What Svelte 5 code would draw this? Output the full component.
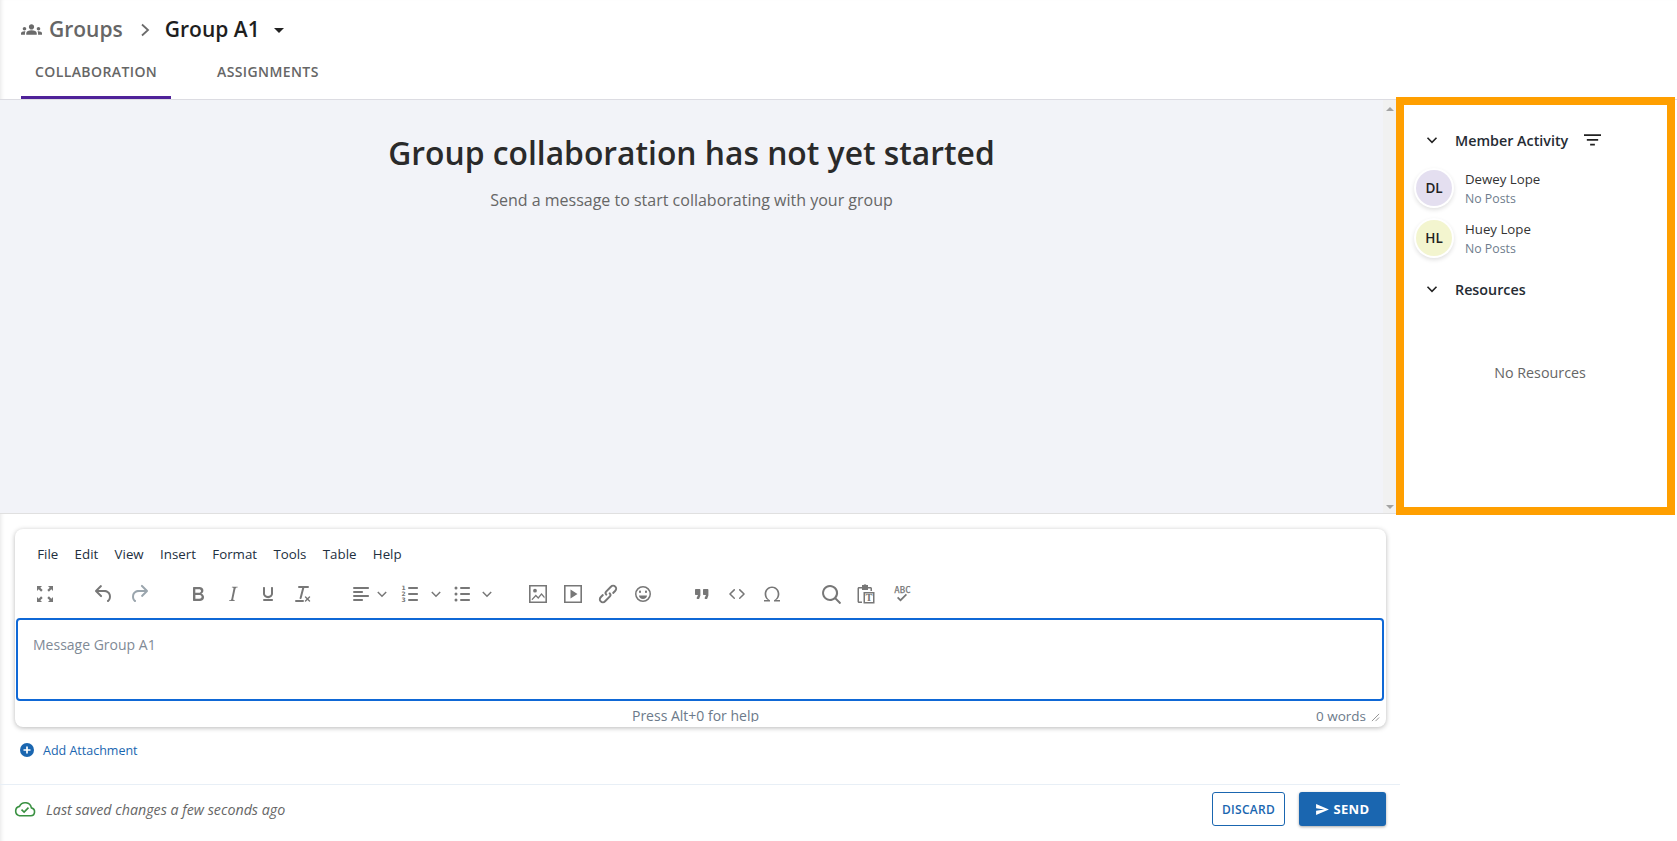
<script>
	const menus = ['File', 'Edit', 'View', 'Insert', 'Format', 'Tools', 'Table', 'Help'];

	const members = [
		{ initials: 'DL', name: 'Dewey Lope', color: '#e4dff0' },
		{ initials: 'HL', name: 'Huey Lope', color: '#f3f5cf' }
	];

	// tinymce-style icons on a 24px grid
	const icons = {
		full: 'M4 4h5L7.300 5.700l2.400 2.400-1.600 1.600-2.400-2.400L4 9V4Zm16 0v5l-1.700-1.700-2.400 2.400-1.600-1.600 2.400-2.400L15 4h5ZM4 20v-5l1.700 1.700 2.400-2.400 1.600 1.600-2.400 2.400L9 20H4Zm16 0h-5l1.700-1.700-2.400-2.400 1.600-1.600 2.400 2.400L20 15v5Z',
		undo: 'M6.400 8H12c3.700 0 6.200 2 6.800 5.100.6 2.700-.4 5.600-2.300 6.800a1 1 0 0 1-1-1.800c1.100-.6 1.800-2.700 1.400-4.600-.5-2.100-2.100-3.500-4.900-3.500H6.400l3.300 3.300a1 1 0 1 1-1.400 1.400l-5-5a1 1 0 0 1 0-1.400l5-5a1 1 0 0 1 1.400 1.400L6.400 8Z',
		redo: 'M17.600 10H12c-2.800 0-4.400 1.400-4.900 3.500-.4 2 .3 4 1.400 4.600a1 1 0 1 1-1 1.800c-2-1.200-2.900-4.100-2.300-6.800.6-3 3-5.100 6.800-5.100h5.600l-3.300-3.300a1 1 0 1 1 1.400-1.400l5 5a1 1 0 0 1 0 1.400l-5 5a1 1 0 0 1-1.400-1.400l3.300-3.300Z',
		bold: 'M7.800 19c-.3 0-.5 0-.6-.2l-.2-.5V5.700c0-.2 0-.4.2-.5l.6-.2h5c1.500 0 2.700.3 3.500 1 .7.6 1.100 1.400 1.100 2.500a3 3 0 0 1-.6 1.900c-.4.6-1 1-1.600 1.200.4.100.9.3 1.300.6s.8.7 1 1.200c.4.4.5 1 .5 1.600 0 1.300-.4 2.300-1.300 3-.8.7-2.100 1-3.800 1H7.800Zm5-8.300c.6 0 1.200-.1 1.600-.5.4-.3.6-.7.6-1.300 0-1.100-.8-1.700-2.300-1.700H9.300v3.500h3.400Zm.5 6c.7 0 1.300-.1 1.700-.4.4-.4.6-.9.6-1.500s-.2-1-.7-1.400c-.4-.3-1-.4-2-.4H9.400v3.800h4Z',
		italic: 'm16.700 4.700-.1.9h-.3c-.6 0-1 0-1.400.3-.3.3-.4.6-.5 1.100l-2.100 9.800v.6c0 .5.4.8 1.400.8h.2l-.2.8H8l.2-.8h.2c1.100 0 1.800-.5 2-1.500l2-9.800.1-.5c0-.6-.4-.8-1.400-.8h-.3l.2-.9h5.800Z',
		underline: 'M16 5c.6 0 1 .4 1 1v5.500a4 4 0 0 1-.4 1.800l-1 1.400a5.300 5.300 0 0 1-5.500 1 5 5 0 0 1-1.600-1c-.5-.4-.8-.9-1.100-1.400a4 4 0 0 1-.4-1.800V6c0-.6.4-1 1-1s1 .4 1 1v5.500c0 .3 0 .6.2 1l.6.7a3.300 3.300 0 0 0 2.200.8 3.400 3.400 0 0 0 2.200-.8c.3-.2.4-.5.6-.8l.2-.9V6c0-.6.4-1 1-1ZM8 17h8c.6 0 1 .4 1 1s-.4 1-1 1H8a1 1 0 0 1 0-2Z',
		clear: 'M13.200 6a1 1 0 0 1 0 .2l-2.600 10a1 1 0 0 1-1 .8h-.2a.8.8 0 0 1-.8-1l2.600-10H8a1 1 0 1 1 0-2h9a1 1 0 0 1 0 2h-3.800ZM5 18h7a1 1 0 0 1 0 2H5a1 1 0 0 1 0-2Zm13 1.500L16.500 18 15 19.500a.7.7 0 0 1-1-1l1.500-1.500-1.500-1.500a.7.7 0 0 1 1-1l1.500 1.500 1.500-1.500a.7.7 0 0 1 1 1L17.500 17l1.500 1.500a.7.7 0 0 1-1 1Z',
		align: 'M5 5h14c.6 0 1 .4 1 1s-.4 1-1 1H5a1 1 0 1 1 0-2Zm0 4h8c.6 0 1 .4 1 1s-.4 1-1 1H5a1 1 0 1 1 0-2Zm0 8h8c.6 0 1 .4 1 1s-.4 1-1 1H5a1 1 0 0 1 0-2Zm0-4h14c.6 0 1 .4 1 1s-.4 1-1 1H5a1 1 0 0 1 0-2Z',
		ol: 'M10 17h8c.6 0 1 .4 1 1s-.4 1-1 1h-8a1 1 0 0 1 0-2Zm0-6h8c.6 0 1 .4 1 1s-.4 1-1 1h-8a1 1 0 0 1 0-2Zm0-6h8c.6 0 1 .4 1 1s-.4 1-1 1h-8a1 1 0 1 1 0-2Z',
		ul: 'M11 5h8c.6 0 1 .4 1 1s-.4 1-1 1h-8a1 1 0 0 1 0-2Zm0 6h8c.6 0 1 .4 1 1s-.4 1-1 1h-8a1 1 0 0 1 0-2Zm0 6h8c.6 0 1 .4 1 1s-.4 1-1 1h-8a1 1 0 0 1 0-2ZM6 4.500a1.500 1.500 0 1 1 0 3 1.500 1.500 0 0 1 0-3Zm0 6a1.500 1.500 0 1 1 0 3 1.500 1.500 0 0 1 0-3Zm0 6a1.500 1.500 0 1 1 0 3 1.500 1.500 0 0 1 0-3Z',
		image: 'M3 3h18v18H3V3Zm1.600 1.600v14.800h14.800V4.600H4.600ZM9 6.800a1.900 1.900 0 1 1 0 3.800 1.900 1.900 0 0 1 0-3.800ZM5.500 17.200l4.300-4.600 2.400 2.400 3.300-4.100 3 3.700v1.800l-3-3.500-3.200 4-2.500-2.400-3.300 3.500h-.7v-.8Z',
		video: 'M3 3h18v18H3V3Zm1.600 1.600v14.800h14.800V4.600H4.600ZM9.500 7.500l7 4.500-7 4.500v-9Z',
		link: 'M6.200 12.300a1 1 0 0 1 1.400 1.400l-2 2a2 2 0 1 0 2.800 2.800l4.800-4.800a1 1 0 0 0 0-1.400 1 1 0 1 1 1.400-1.300 2.900 2.900 0 0 1 0 4L9.800 20a4 4 0 1 1-5.600-5.700l2-2Zm11.600-.6a1 1 0 0 1-1.400-1.400l2-2a2 2 0 1 0-2.800-2.800L10.800 10.300a1 1 0 0 0 0 1.400 1 1 0 1 1-1.400 1.300 2.900 2.900 0 0 1 0-4L14.200 4a4 4 0 1 1 5.600 5.700l-2 2Z',
		emoji: 'M9 11c.6 0 1-.6 1-1.300S9.600 8.500 9 8.500s-1 .5-1 1.200.4 1.300 1 1.300Zm6 0c.6 0 1-.6 1-1.300s-.4-1.200-1-1.200-1 .5-1 1.200.4 1.300 1 1.300Zm-7 2.500h8c0 2-1.800 3.500-4 3.500s-4-1.500-4-3.500ZM12 4a8 8 0 1 1 0 16 8 8 0 0 1 0-16Zm0 1.500a6.500 6.500 0 1 0 0 13 6.500 6.500 0 0 0 0-13Z',
		quote: 'M7.500 17h.9c.4 0 .7-.2.9-.6L10.200 14c.1-.3.200-.5.200-.8V8c0-.6-.4-1-1-1H6c-.6 0-1 .4-1 1v4c0 .6.400 1 1 1h2l-1.300 2.700a1 1 0 0 0 .8 1.300Zm8 0h.9c.4 0 .7-.2.9-.6L18.200 14c.1-.3.200-.5.200-.8V8c0-.6-.4-1-1-1H14c-.6 0-1 .4-1 1v4c0 .6.400 1 1 1h2l-1.300 2.700a1 1 0 0 0 .8 1.300Z',
		code: 'M9.800 15.700c.3.300.3.800 0 1-.3.400-.8.400-1 0l-4.400-4.100a.8.800 0 0 1 0-1.100l4.300-4.200c.3-.3.800-.3 1.100 0 .3.300.3.800 0 1.100L6 12l3.800 3.700ZM14.200 15.700 18 12l-3.800-3.600c-.3-.3-.3-.8 0-1.100.3-.3.800-.3 1.100 0l4.300 4.200c.3.300.3.800 0 1.100l-4.400 4.100c-.2.400-.7.400-1 0-.3-.2-.3-.7 0-1Z',
		omega: 'M4 19.500v-1.400h3.900A7.400 7.400 0 0 1 4.600 12c0-4.200 3.200-7.500 7.400-7.500s7.400 3.300 7.400 7.500a7.400 7.400 0 0 1-3.300 6.100H20v1.400h-6v-1.300c2.300-1 3.700-3.400 3.700-6.200 0-3.400-2.500-6-5.700-6s-5.700 2.600-5.700 6c0 2.800 1.400 5.200 3.700 6.200v1.300H4Z',
		search: 'M16 17.300a8 8 0 1 1 1.400-1.400l4.300 4.400a1 1 0 0 1-1.400 1.400l-4.400-4.400Zm-5-.3a6 6 0 1 0 0-12 6 6 0 0 0 0 12Z',
		paste: 'M8 3h1.500a2 2 0 0 1 3 0H14v2h2.500c.8 0 1.500.7 1.500 1.500V9h-1.500V6.500H14V8H8V6.500H5v13h3V21H5c-.8 0-1.500-.7-1.500-1.500v-13C3.500 5.700 4.200 5 5 5h3V3ZM9.500 10h11v11.500h-11V10Zm1.500 1.500V20h8v-8.500h-8Z',
		spell: 'M8 16l1.200-1.200 2.300 2.300 5.300-5.300L18 13l-6.500 6.500L8 16Z'
	};

	const groups = [
		[{ icon: 'full' }],
		[{ icon: 'undo' }, { icon: 'redo', off: true }],
		[{ icon: 'bold' }, { icon: 'italic' }, { icon: 'underline' }, { icon: 'clear' }],
		[{ icon: 'align', split: true, tight: true }, { icon: 'ol', split: true }, { icon: 'ul', split: true }],
		[{ icon: 'image' }, { icon: 'video' }, { icon: 'link' }, { icon: 'emoji' }],
		[{ icon: 'quote' }, { icon: 'code' }, { icon: 'omega' }],
		[{ icon: 'search' }, { icon: 'paste' }, { icon: 'spell' }]
	];
</script>

<div class="page">
	<header>
		<div class="crumbs">
			<svg class="people" viewBox="0 5.500 24 13" aria-hidden="true">
				<path d="M12 12.750c1.630 0 3.070.390 4.240.900 1.080.480 1.760 1.560 1.760 2.730V18H6v-1.610c0-1.180.680-2.260 1.760-2.730 1.170-.520 2.610-.910 4.240-.910ZM4 13c1.100 0 2-.900 2-2s-.900-2-2-2-2 .900-2 2 .900 2 2 2Zm1.130 1.100A6.980 6.980 0 0 0 4 14c-.990 0-1.930.210-2.780.580A2.010 2.010 0 0 0 0 16.430V18h4.500v-1.610c0-.830.230-1.610.630-2.290ZM20 13c1.100 0 2-.900 2-2s-.900-2-2-2-2 .900-2 2 .900 2 2 2Zm4 3.430c0-.810-.480-1.530-1.220-1.850A6.950 6.950 0 0 0 20 14c-.390 0-.760.040-1.130.100.400.680.630 1.460.630 2.290V18H24v-1.570ZM12 6c1.660 0 3 1.340 3 3s-1.340 3-3 3-3-1.340-3-3 1.340-3 3-3Z" />
			</svg>
			<span class="root">Groups</span>
			<svg class="sep" viewBox="0 0 10 14" aria-hidden="true"><path d="M2 1.500 8 7l-6 5.500" /></svg>
			<span class="current">Group A1</span>
			<span class="caret"></span>
		</div>
		<nav>
			<span class="tab active">COLLABORATION</span>
			<span class="tab">ASSIGNMENTS</span>
		</nav>
	</header>

	<div class="content">
		<div class="left">
			<section class="thread">
				<div class="empty">
					<h1>Group collaboration has not yet started</h1>
					<p>Send a message to start collaborating with your group</p>
				</div>
				<div class="scrollbar">
					<span class="arrow up"></span>
					<span class="arrow down"></span>
				</div>
			</section>

			<div class="composer">
				<div class="editor">
					<div class="menubar">
						{#each menus as menu}
							<span>{menu}</span>
						{/each}
					</div>
					<div class="toolbar">
						{#each groups as group}
							<div class="group">
								{#each group as btn}
									<span class="btn" class:split={btn.split} class:tight={btn.tight} class:off={btn.off}>
										<svg viewBox="0 0 24 24" aria-hidden="true">
											<path d={icons[btn.icon]} fill-rule="evenodd" />
											{#if btn.icon === 'ol'}
												<text class="digits" x="4.500" y="8">1</text>
												<text class="digits" x="4.500" y="14">2</text>
												<text class="digits" x="4.500" y="20">3</text>
											{:else if btn.icon === 'paste'}
												<text class="paste-t" x="15" y="19.200">T</text>
											{:else if btn.icon === 'spell'}
												<text class="abc" x="13.500" y="11">ABC</text>
											{/if}
										</svg>
										{#if btn.split}
											<svg class="chev" viewBox="0 0 10 10" aria-hidden="true"><path d="M.8 3 5 7.200 9.200 3" /></svg>
										{/if}
									</span>
								{/each}
							</div>
						{/each}
					</div>
					<div class="input">Message Group A1</div>
					<div class="status">
						<span class="help">Press Alt+0 for help</span>
						<span class="words">0 words</span>
						<svg class="grip" viewBox="0 0 10 10" aria-hidden="true"><path d="M9 1 1 9M9 5 5 9" /></svg>
					</div>
				</div>

				<div class="attach">
					<svg viewBox="0 0 14 14" aria-hidden="true">
						<circle cx="7" cy="7" r="7" fill="#1a66b0" />
						<path d="M7 3.500v7M3.500 7h7" stroke="#fff" stroke-width="1.700" />
					</svg>
					<span>Add Attachment</span>
				</div>
			</div>

			<footer>
				<div class="saved">
					<svg viewBox="0 0 22 16" aria-hidden="true">
						<path d="M5.500 14.800h11.300a4 4 0 0 0 .6-7.900 6.300 6.300 0 0 0-11.900-1.500A4.800 4.800 0 0 0 5.500 14.800Z" />
						<path d="m7.500 8.600 2.600 2.500 4.400-4.500" />
					</svg>
					<em>Last saved changes a few seconds ago</em>
				</div>
				<div class="actions">
					<span class="discard">DISCARD</span>
					<span class="send">
						<svg viewBox="0 0 14 12" aria-hidden="true"><path d="M0 0 14 6 0 12V7.300L9 6 0 4.700V0Z" /></svg>
						SEND
					</span>
				</div>
			</footer>
		</div>

		<aside>
			<div class="section-head">
				<svg class="toggle" viewBox="0 0 12 12" aria-hidden="true"><path d="M1.500 3.800 6 8.300l4.500-4.500" /></svg>
				<span>Member Activity</span>
				<svg class="filter" viewBox="0 0 18 12" aria-hidden="true"><path d="M0 0h18v1.800H0zM3 5h12v1.800H3zM6.500 10h5v1.800h-5z" /></svg>
			</div>
			<ul>
				{#each members as member}
					<li>
						<span class="avatar" style:background={member.color}>{member.initials}</span>
						<div>
							<div class="name">{member.name}</div>
							<div class="posts">No Posts</div>
						</div>
					</li>
				{/each}
			</ul>
			<div class="section-head second">
				<svg class="toggle" viewBox="0 0 12 12" aria-hidden="true"><path d="M1.500 3.800 6 8.300l4.500-4.500" /></svg>
				<span>Resources</span>
			</div>
			<p class="none">No Resources</p>
		</aside>
	</div>
</div>

<style>
	:global(body) {
		background: #fff;
	}

	.page {
		width: 1677px;
		height: 841px;
		overflow: hidden;
		font-family: 'Open Sans', sans-serif;
		color: #1e1e1e;
		box-shadow: inset 4px 0 4px -3px rgba(0, 0, 0, 0.1);
	}

	header {
		height: 100px;
		box-sizing: border-box;
		padding: 14px 0 0 21px;
		border-bottom: 1px solid #dcdce2;
	}

	.crumbs {
		display: flex;
		align-items: center;
		height: 30px;
		font-size: 21px;
		font-weight: 600;
	}

	.people {
		width: 21px;
		height: 13px;
		fill: #6b6b6b;
		margin-right: 7px;
	}

	.root {
		color: #666;
	}

	.sep {
		width: 10px;
		height: 14px;
		margin: 2px 15px 0 17px;
		fill: none;
		stroke: #6b6b6b;
		stroke-width: 1.800;
	}

	.caret {
		margin: 2px 0 0 14px;
		border-left: 5px solid transparent;
		border-right: 5px solid transparent;
		border-top: 5px solid #222;
	}

	nav {
		display: flex;
		margin-top: 8px;
	}

	.tab {
		box-sizing: border-box;
		height: 47px;
		padding: 10px 14px 0;
		font-size: 14px;
		line-height: 19px;
		letter-spacing: 0.4px;
		font-weight: 600;
		color: #666;
		margin-right: 32px;
		white-space: nowrap;
	}

	.tab.active {
		width: 150px;
		margin-right: 32px;
		border-bottom: 3px solid #4f2299;
	}

	.content {
		display: flex;
	}

	.left {
		width: 1400px;
		flex: none;
	}

	.thread {
		width: 1396px;
		height: 414px;
		display: flex;
		background: #f2f3f8;
		border-bottom: 1px solid #e0e0e0;
		box-sizing: border-box;
	}

	.empty {
		flex: 1;
		text-align: center;
		padding-top: 31px;
	}

	h1 {
		margin: 0;
		font-size: 31.800px;
		line-height: 44px;
		font-weight: 600;
		color: #2a2a2a;
	}

	.empty p {
		margin: 13px 0 0;
		font-size: 16px;
		line-height: 24px;
		color: #666;
	}

	.scrollbar {
		width: 13px;
		background: #f1f1f1;
		display: flex;
		flex-direction: column;
		justify-content: space-between;
		align-items: center;
		padding: 7px 0 4px;
		box-sizing: border-box;
	}

	.arrow {
		border-left: 4px solid transparent;
		border-right: 4px solid transparent;
	}

	.arrow.up {
		border-bottom: 4px solid #a3a3a3;
	}

	.arrow.down {
		border-top: 4px solid #a3a3a3;
	}

	.composer {
		padding: 15px 0 0 15px;
	}

	.editor {
		width: 1371px;
		height: 198px;
		box-sizing: border-box;
		border-radius: 8px;
		background: #fff;
		box-shadow: 0 1px 5px rgba(0, 0, 0, 0.28);
		display: flex;
		flex-direction: column;
	}

	.menubar {
		display: flex;
		height: 37px;
		flex: none;
		padding: 13px 0 0 14px;
		box-sizing: border-box;
		align-items: center;
		font-size: 13.300px;
		color: #222f3e;
	}

	.menubar span {
		padding: 0 8.200px;
	}

	.toolbar {
		display: flex;
		gap: 24px;
		height: 52px;
		flex: none;
		box-sizing: border-box;
		padding: 4px 0 0 12.500px;
		align-items: center;
	}

	.group {
		display: flex;
	}

	.btn {
		width: 35px;
		height: 34px;
		display: flex;
		align-items: center;
		justify-content: center;
	}

	.btn svg {
		width: 24px;
		height: 24px;
		fill: #777;
		flex: none;
	}

	.btn.off svg {
		fill: #9aa5ad;
	}

	.btn.split {
		width: 50.500px;
		justify-content: flex-start;
		padding-left: 4px;
		box-sizing: border-box;
	}

	.btn svg.chev {
		width: 10px;
		height: 10px;
		margin-left: 8px;
		fill: none;
		stroke: #777;
		stroke-width: 1.500;
	}

	.btn.tight svg.chev {
		margin-left: 4px;
	}

	.digits {
		font-family: 'DejaVu Sans', sans-serif;
		font-size: 6px;
		font-weight: 700;
		text-anchor: middle;
	}

	.paste-t {
		font-family: 'Liberation Serif', serif;
		font-size: 10.500px;
		font-weight: 700;
		text-anchor: middle;
	}

	.abc {
		font-family: 'DejaVu Sans Mono', monospace;
		font-size: 9px;
		text-anchor: middle;
		stroke: #777;
		stroke-width: 0.250;
	}

	.input {
		margin: 0 2px 0 1px;
		height: 83px;
		flex: none;
		box-sizing: border-box;
		border: 2px solid #0f68d6;
		border-radius: 4px;
		padding: 15px 15px;
		font-size: 14px;
		line-height: 20px;
		color: #7f8a96;
	}

	.status {
		flex: 1;
		position: relative;
		display: flex;
		justify-content: flex-end;
		align-items: center;
		padding: 3px 6px 0 0;
		font-size: 14px;
		color: #6c7a8a;
		overflow: hidden;
	}

	.words {
		font-size: 13.500px;
	}

	.help {
		position: absolute;
		left: 0;
		right: 10px;
		top: 5px;
		height: 16px;
		overflow: hidden;
		text-align: center;
		line-height: 19px;
	}

	.grip {
		width: 9px;
		height: 9px;
		margin: 3px 0 0 5px;
		fill: none;
		stroke: #8a8a8a;
		stroke-width: 1;
	}

	.attach {
		display: flex;
		align-items: center;
		gap: 9px;
		height: 20px;
		margin: 13px 0 0 5px;
		font-size: 12.500px;
		color: #1a66b0;
	}

	.attach svg {
		width: 14px;
		height: 14px;
	}

	footer {
		margin-top: 24px;
		height: 57px;
		box-sizing: border-box;
		border-top: 1px solid #e8eff6;
		display: flex;
		justify-content: space-between;
		align-items: flex-start;
		padding: 7px 14px 0 14px;
	}

	.saved {
		display: flex;
		align-items: center;
		gap: 10px;
		height: 34px;
		font-size: 14.250px;
		color: #666;
	}

	.saved svg {
		width: 22px;
		height: 16px;
		fill: none;
		stroke: #3a9142;
		stroke-width: 1.600;
	}

	.actions {
		display: flex;
		gap: 14px;
	}

	.discard,
	.send {
		box-sizing: border-box;
		height: 34px;
		display: flex;
		align-items: center;
		justify-content: center;
		border-radius: 3px;
		font-weight: 600;
		font-size: 12px;
		letter-spacing: 0.3px;
	}

	.discard {
		width: 73px;
		border: 1px solid #1a66b0;
		color: #1a66b0;
	}

	.send {
		width: 87px;
		gap: 5px;
		background: #1a66b0;
		color: #fff;
		font-size: 13px;
		font-weight: 700;
		box-shadow: 0 1px 3px rgba(0, 0, 0, 0.35);
	}

	.send svg {
		width: 13px;
		height: 11px;
		fill: #fff;
	}

	aside {
		width: 263px;
		height: 402px;
		margin: 5px 0 0 4px;
		box-sizing: border-box;
		outline: 8px solid #ff9f00;
		padding-top: 23px;
		position: relative;
	}

	.section-head {
		display: flex;
		align-items: center;
		height: 24px;
		padding-left: 22px;
		font-size: 14.300px;
		font-weight: 600;
		color: #252b33;
	}

	.section-head.second {
		margin-top: 14px;
	}

	.toggle {
		width: 12px;
		height: 12px;
		margin-right: 17px;
		fill: none;
		stroke: #222;
		stroke-width: 1.600;
	}

	.filter {
		width: 17px;
		height: 12px;
		margin-left: 16px;
		fill: #222;
	}

	ul {
		list-style: none;
		margin: 11px 0 0;
		padding: 0 0 0 12px;
	}

	li {
		display: flex;
		height: 50px;
		align-items: center;
		gap: 13px;
	}

	.avatar {
		width: 36px;
		height: 36px;
		border-radius: 50%;
		display: flex;
		align-items: center;
		justify-content: center;
		font-size: 13.500px;
		font-weight: 600;
		color: #222;
		box-shadow: 0 0 0 2px #fff, 0 2px 4px 2px rgba(0, 0, 0, 0.12);
	}

	.name {
		font-size: 13.250px;
		line-height: 18px;
		color: #333;
	}

	.posts {
		margin-top: 2px;
		font-size: 12.300px;
		line-height: 17px;
		color: #6e7c8c;
	}

	.none {
		margin: 62px 0 0;
		padding-left: 9px;
		text-align: center;
		font-size: 14.300px;
		color: #666;
	}
</style>
